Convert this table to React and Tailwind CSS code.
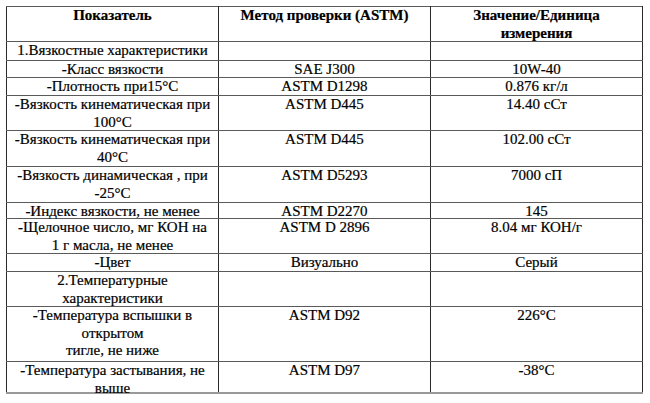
import React from 'react';

// each row: cell content height (row height minus the 1px collapsed border)
const rows = [
    { h: 'h-[18px]', name: ['1.Вязкостные характеристики'], method: '', value: '' },
    { h: 'h-[16px]', name: ['-Класс вязкости'], method: 'SAE J300', value: '10W-40' },
    { h: 'h-[17px]', name: ['-Плотность при15°C'], method: 'ASTM D1298', value: '0.876 кг/л' },
    { h: 'h-[34px]', name: ['-Вязкость кинематическая при', '100°C'], method: 'ASTM D445', value: '14.40 сСт' },
    { h: 'h-[35px]', name: ['-Вязкость кинематическая при', '40°C'], method: 'ASTM D445', value: '102.00 сСт' },
    { h: 'h-[35px]', name: ['-Вязкость динамическая , при', '-25°C'], method: 'ASTM D5293', value: '7000 сП' },
    { h: 'h-[15px]', name: ['-Индекс вязкости, не менее'], method: 'ASTM D2270', value: '145' },
    { h: 'h-[34px]', name: ['-Щелочное число, мг КОН на', '1 г масла, не менее'], method: 'ASTM D 2896', value: '8.04 мг КОН/г' },
    { h: 'h-[17px]', name: ['-Цвет'], method: 'Визуально', value: 'Серый' },
    { h: 'h-[34px]', name: ['2.Температурные', 'характеристики'], method: '', value: '' },
    { h: 'h-[54px]', name: ['-Температура вспышки в', 'открытом', 'тигле, не ниже'], method: 'ASTM D92', value: '226°C' },
    { h: 'h-[30px]', name: ['-Температура застывания, не', 'выше'], method: 'ASTM D97', value: '-38°C' },
];

const cell = "border-x border-y border-x-[#2a2a2a] border-y-[#5a5a5a] align-top text-center p-0";

export default function App() {
    return (
        <div className="w-[650px] h-[403px] bg-white pt-[6px] pl-[6px] font-['Liberation_Serif','Times_New_Roman',serif]">
            <table className="border-collapse table-fixed w-[636px] text-[15px] leading-[17.5px] text-black [-webkit-text-stroke:0.2px_#000]">
                <colgroup>
                    <col className="w-[212px]" />
                    <col className="w-[212px]" />
                    <col className="w-[212px]" />
                </colgroup>
                <thead>
                    <tr>
                        <th className={`${cell} font-bold`}><div className="h-[34px]">Показатель</div></th>
                        <th className={`${cell} font-bold`}><div className="h-[34px]">Метод проверки (ASTM)</div></th>
                        <th className={`${cell} font-bold`}><div className="h-[34px]">Значение/Единица<br />измерения</div></th>
                    </tr>
                </thead>
                <tbody>
                    {rows.map((r, i) => (
                        <tr key={i} className={i === rows.length - 1 ? 'border-b-2 border-b-[#999]' : ''}>
                            <td className={cell}>
                                <div className={r.h}>
                                    {r.name.map((line, j) => (
                                        <div key={j}>{line}</div>
                                    ))}
                                </div>
                            </td>
                            <td className={cell}><div className={r.h}>{r.method}</div></td>
                            <td className={cell}><div className={r.h}>{r.value}</div></td>
                        </tr>
                    ))}
                </tbody>
            </table>
        </div>
    );
}
